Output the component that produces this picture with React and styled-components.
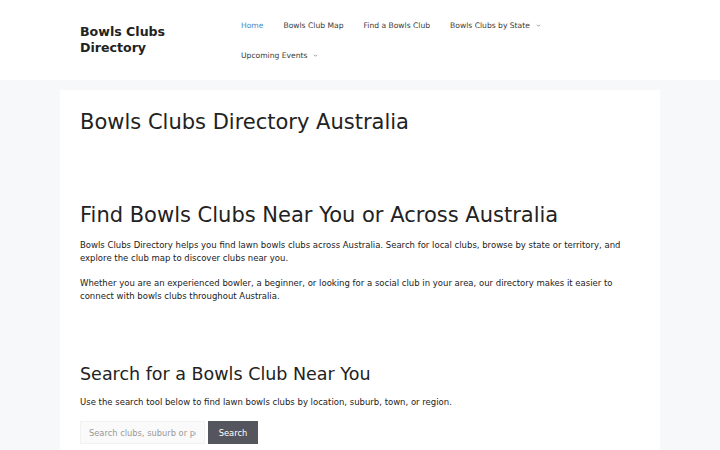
import React from 'react';
import styled, { createGlobalStyle } from 'styled-components';

const GlobalStyle = createGlobalStyle`
  html, body {
    margin: 0;
    padding: 0;
    background: #f7f8f9;
    font-family: "DejaVu Sans", "Noto Sans", sans-serif;
    color: #222222;
  }
  * { box-sizing: border-box; }
`;

const SiteHeader = styled.header`
  background: #ffffff;
  height: 80px;
`;

const HeaderInner = styled.div`
  width: 600px;
  margin: 0 auto;
  padding: 0 20px;
  display: flex;
  align-items: flex-start;
`;

const SiteTitle = styled.a`
  display: block;
  width: 151px;
  padding-top: 24px;
  font-size: 12.6px;
  font-weight: 700;
  line-height: 16px;
  color: #222222;
  text-decoration: none;
`;

const Nav = styled.nav`
  display: flex;
  flex-wrap: wrap;
  flex: 1;
  padding-top: 10px;
`;

const NavItem = styled.a`
  display: flex;
  align-items: center;
  gap: 6px;
  padding: 0 10px;
  height: 30px;
  font-size: 7.6px;
  color: ${(p) => (p.$active ? '#1e73be' : '#3a3a3a')};
  text-decoration: none;
  opacity: ${(p) => (p.$active ? 0.85 : 1)};
`;

const Caret = styled.svg`
  width: 5px;
  height: 5px;
`;

const Content = styled.main`
  width: 600px;
  margin: 10px auto 0;
  background: #ffffff;
  padding: 18px 20px 40px;
`;

const PageTitle = styled.h1`
  margin: 0 0 66px;
  font-size: 21px;
  font-weight: 400;
  line-height: 28px;
`;

const SectionTitle = styled.h2`
  margin: 0 0 ${(p) => p.$gap || 10}px;
  font-size: ${(p) => p.$size || 21}px;
  font-weight: 400;
  line-height: 1.3;
`;

const Text = styled.p`
  margin: 0 0 12px;
  font-size: 8.5px;
  line-height: 13px;
  color: #222222;
`;

const Section = styled.section`
  margin-bottom: ${(p) => p.$gap || 0}px;
`;

const SearchForm = styled.form`
  display: flex;
  gap: 3px;
  margin-top: 12px;
`;

const SearchInput = styled.input`
  width: 125px;
  height: 23px;
  padding: 0 8px;
  border: 1px solid #f2f2f2;
  background: #fafafa;
  font-family: inherit;
  font-size: 8.3px;
  color: #666666;
  outline: none;
  &::placeholder { color: #999999; }
`;

const SearchButton = styled.button`
  width: 50px;
  height: 23px;
  border: none;
  background: #55555e;
  color: #ffffff;
  font-family: inherit;
  font-size: 8.3px;
  cursor: pointer;
`;

const Chevron = () => (
  <Caret viewBox="0 0 10 10" fill="none" stroke="#555555" strokeWidth="1.2">
    <path d="M2 3.5 L5 6.5 L8 3.5" />
  </Caret>
);

const links = [
  { label: 'Home', active: true },
  { label: 'Bowls Club Map' },
  { label: 'Find a Bowls Club' },
  { label: 'Bowls Clubs by State', menu: true },
  { label: 'Upcoming Events', menu: true },
];

export default function App() {
  return (
    <>
      <GlobalStyle />
      <SiteHeader>
        <HeaderInner>
          <SiteTitle href="#">Bowls Clubs Directory</SiteTitle>
          <Nav>
            {links.map((l) => (
              <NavItem key={l.label} href="#" $active={l.active}>
                {l.label}
                {l.menu && <Chevron />}
              </NavItem>
            ))}
          </Nav>
        </HeaderInner>
      </SiteHeader>
      <Content>
        <PageTitle>Bowls Clubs Directory Australia</PageTitle>
        <Section $gap={60}>
          <SectionTitle>Find Bowls Clubs Near You or Across Australia</SectionTitle>
          <Text>
            Bowls Clubs Directory helps you find lawn bowls clubs across Australia. Search for local clubs, browse by
            state or territory, and explore the club map to discover clubs near you.
          </Text>
          <Text>
            Whether you are an experienced bowler, a beginner, or looking for a social club in your area, our directory
            makes it easier to connect with bowls clubs throughout Australia.
          </Text>
        </Section>
        <Section>
          <SectionTitle $size={17.5} $gap={10}>Search for a Bowls Club Near You</SectionTitle>
          <Text>Use the search tool below to find lawn bowls clubs by location, suburb, town, or region.</Text>
          <SearchForm onSubmit={(e) => e.preventDefault()}>
            <SearchInput placeholder="Search clubs, suburb or postcode" />
            <SearchButton type="submit">Search</SearchButton>
          </SearchForm>
        </Section>
      </Content>
    </>
  );
}
